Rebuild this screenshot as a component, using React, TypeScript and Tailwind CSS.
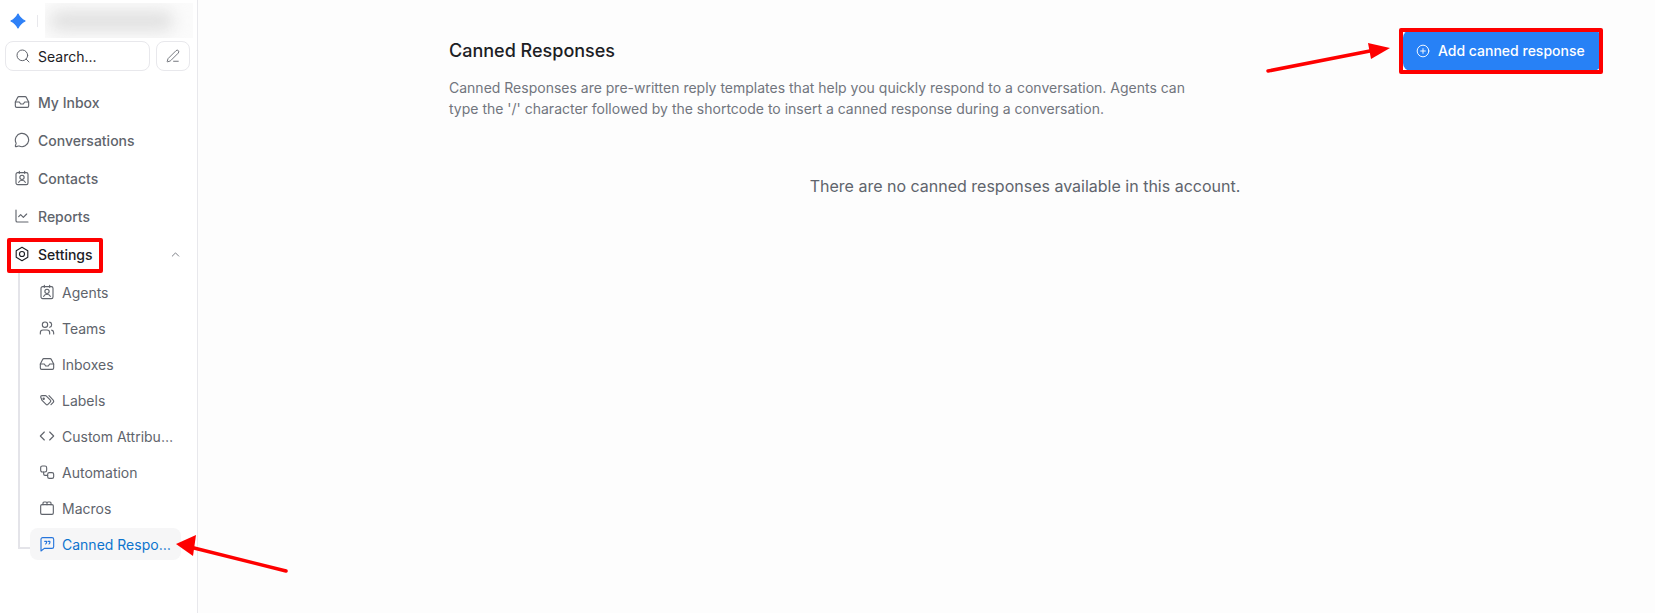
import type { ReactNode } from 'react';
import { ChevronUp, Code, Inbox, MessageCircle, Search, Users, ChartLine, CirclePlus, PenLine } from 'lucide-react';

function Ico({ children, className = '' }: { children: ReactNode; className?: string }) {
  return (
    <svg width="16" height="16" viewBox="0 0 24 24" fill="none" stroke="currentColor" strokeWidth="1.7" strokeLinecap="round" strokeLinejoin="round" className={'shrink-0 ' + className}>
      {children}
    </svg>
  );
}

const ContactIcon = () => (
  <Ico>
    <rect x="3" y="4" width="18" height="18" rx="2.5" />
    <path d="M8 2v3M16 2v3" />
    <circle cx="12" cy="11" r="3.2" />
    <path d="M7 18.5c.6-2 2.6-3.2 5-3.2s4.400 1.200 5 3.200" />
  </Ico>
);

const SettingsIcon = () => (
  <Ico>
    <path d="M12 2l8.700 5v10L12 22l-8.700-5V7z" />
    <circle cx="12" cy="12" r="3.800" />
  </Ico>
);

const LabelsIcon = () => (
  <Ico>
    <path d="M2.500 7.500a2 2 0 0 1 2-2h5.200a2 2 0 0 1 1.400.6l6 6a2 2 0 0 1 0 2.800l-3.700 3.700a2 2 0 0 1-2.800 0l-6-6a2 2 0 0 1-.6-1.400z" />
    <path d="M15 5.500l6 6.200a3 3 0 0 1 0 4.200L18 19" />
    <circle cx="7" cy="10" r="1" />
  </Ico>
);

const AutomationIcon = () => (
  <Ico>
    <rect x="2.500" y="3" width="9" height="9" rx="2.500" />
    <rect x="13" y="13" width="9" height="8.500" rx="2.500" />
    <path d="M7 12v3a2 2 0 0 0 2 2h4" />
  </Ico>
);

const MacrosIcon = () => (
  <Ico>
    <rect x="2.500" y="7" width="19" height="14.500" rx="2" />
    <path d="M6 7V4.500A1.500 1.500 0 0 1 7.500 3h3A1.500 1.500 0 0 1 12 4.500V7M12 4.500A1.500 1.500 0 0 1 13.500 3h3A1.500 1.500 0 0 1 18 4.500V7" />
  </Ico>
);

const CannedIcon = () => (
  <Ico className="text-[#2675dc]">
    <path d="M5.500 2.500h14A2.500 2.500 0 0 1 22 5v11a2.500 2.500 0 0 1-2.500 2.500H8L3 22.500V5a2.500 2.500 0 0 1 2.500-2.500z" />
    <path d="M8.500 8h2.800v2.300L10 12M13.500 8h2.800v2.300L15 12" />
  </Ico>
);

const IconSize = (Icon: typeof Inbox) => () => <Icon size={16} strokeWidth={1.7} className="shrink-0" />;

const topLinks = [
  { label: 'My Inbox', icon: IconSize(Inbox) },
  { label: 'Conversations', icon: IconSize(MessageCircle) },
  { label: 'Contacts', icon: ContactIcon },
  { label: 'Reports', icon: IconSize(ChartLine) },
];

const settingsLinks = [
  { label: 'Agents', icon: ContactIcon },
  { label: 'Teams', icon: IconSize(Users) },
  { label: 'Inboxes', icon: IconSize(Inbox) },
  { label: 'Labels', icon: LabelsIcon },
  { label: 'Custom Attributes', icon: IconSize(Code) },
  { label: 'Automation', icon: AutomationIcon },
  { label: 'Macros', icon: MacrosIcon },
];

function Arrow({ className, x1, y1, x2, y2, tip }: { className: string; x1: number; y1: number; x2: number; y2: number; tip: string }) {
  return (
    <svg className={className} fill="none">
      <line x1={x1} y1={y1} x2={x2} y2={y2} stroke="#fe0000" strokeWidth="3.5" strokeLinecap="round" />
      <polygon points={tip} fill="#fe0000" />
    </svg>
  );
}

export default function App() {
  return (
    <div className="relative flex h-[613px] w-[1655px] overflow-hidden bg-white text-[14px] font-['Inter',sans-serif] text-[#60646c]">
      <aside className="flex w-[198px] shrink-0 flex-col border-r border-[#e8e8ec] bg-white">
        <div className="flex h-[41px] items-center pl-[10px]">
          <svg width="16" height="16" viewBox="0 0 16 16" className="shrink-0">
            <path d="M8 1 Q10 5.500 15 8 Q10 10.500 8 15 Q6 10.500 1 8 Q6 5.500 8 1Z" fill="#2f81f7" stroke="#2f81f7" strokeWidth="1.200" strokeLinejoin="round" />
          </svg>
          <div className="ml-[11px] h-[12px] w-px bg-[#e8e8ec]" />
          <div className="ml-[7px] h-[35px] w-[148px] overflow-hidden bg-[#fbfbfb]">
            <div className="ml-[4px] mt-[8px] h-[20px] w-[125px] rounded-full bg-[#e0e0e0] blur-[8px]" />
          </div>
        </div>

        <div className="flex gap-[6px] pl-[5px]">
          <div className="flex h-[30px] w-[145px] items-center gap-[7px] rounded-[8px] border border-[#e8e8ec] pl-[9px] text-[#1c2024]">
            <Search size={16} strokeWidth={1.5} className="text-[#60646c]" />
            <span>Search...</span>
          </div>
          <div className="flex h-[30px] w-[34px] items-center justify-center rounded-[8px] border border-[#e8e8ec]">
            <PenLine size={14} strokeWidth={1.5} />
          </div>
        </div>

        <nav className="mt-[12px] flex flex-col">
          {topLinks.map(({ label, icon: Icon }) => (
            <div key={label} className="flex h-[38px] items-center gap-[8px] pl-[14px]">
              <Icon />
              <span className="font-medium">{label}</span>
            </div>
          ))}
          <div className="flex h-[38px] items-center gap-[8px] pl-[14px] text-[#1c2024]">
            <SettingsIcon />
            <span className="font-medium">Settings</span>
            <ChevronUp size={13} strokeWidth={1.5} className="ml-auto mr-[15px] text-[#60646c]" />
          </div>

          <div className="relative ml-[18px] flex flex-col pt-[1px]">
            <div className="absolute left-0 top-0 h-[276px] w-[2px] bg-[#e4e4e9]" />
            <div className="absolute left-0 top-[274px] h-[2px] w-[12px] rounded-bl-[3px] bg-[#e4e4e9]" />
            {settingsLinks.map(({ label, icon: Icon }) => (
              <div key={label} className="flex h-[36px] items-center gap-[7px] pl-[21px]">
                <Icon />
                <span className="w-[112px] truncate">{label}</span>
              </div>
            ))}
            <div className="ml-[12px] mt-[2px] flex h-[32px] w-[151px] items-center gap-[7px] rounded-[8px] bg-[#f6f6f7] pl-[9px] text-[#0d74ce]">
              <CannedIcon />
              <span className="w-[110px] truncate">Canned Responses</span>
            </div>
          </div>
        </nav>
      </aside>

      <main className="flex-1 bg-[#fdfdfd]">
        <div className="ml-[251px] w-[1152px]">
          <div className="flex items-start justify-between pt-[30px]">
            <div>
              <h1 className="mt-[8px] text-[18px] font-medium leading-[26px] text-[#1c2024]">Canned Responses</h1>
              <p className="mt-[13px] w-[760px] leading-[21px] text-[#71757d]">
                Canned Responses are pre-written reply templates that help you quickly respond to a conversation. Agents can type the '/' character followed by the shortcode to insert a canned response during a conversation.
              </p>
            </div>
            <button className="flex h-[41px] w-[198px] items-center gap-[8px] rounded-[8px] bg-[#2781f6] pl-[13px] font-medium text-white">
              <CirclePlus size={14} strokeWidth={1.6} />
              Add canned response
            </button>
          </div>
          <p className="mt-[55px] text-center text-[16px] leading-[24px] text-[#60646c]">There are no canned responses available in this account.</p>
        </div>
      </main>

      {/* annotations on top of the screenshot */}
      <div className="absolute left-[7px] top-[238px] h-[35px] w-[96px] rounded-[2px] border-[4px] border-[#fe0000]" />
      <div className="absolute left-[1399px] top-[28px] h-[46px] w-[204px] rounded-[2px] border-[4px] border-[#fe0000]" />
      <Arrow className="absolute left-0 top-0 h-[613px] w-[1655px]" x1={286} y1={571} x2={190} y2={547} tip="176,544 196,535 193,556" />
      <Arrow className="absolute left-0 top-0 h-[613px] w-[1655px]" x1={1268} y1={71} x2={1375} y2={50} tip="1390,48 1368,43 1371,59" />
    </div>
  );
}
